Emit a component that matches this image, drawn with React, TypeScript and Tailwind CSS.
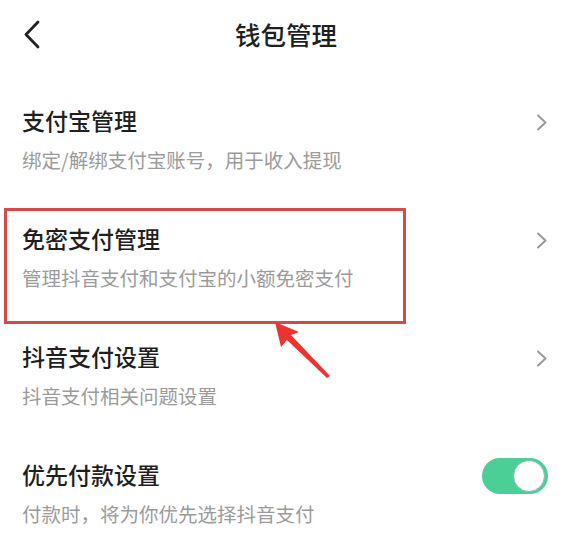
import React from "react";

type Item = {
  title: string;
  desc: string;
  toggle?: boolean;
  highlight?: boolean;
};

const items: Item[] = [
  { title: "支付宝管理", desc: "绑定/解绑支付宝账号，用于收入提现" },
  {
    title: "免密支付管理",
    desc: "管理抖音支付和支付宝的小额免密支付",
    highlight: true,
  },
  { title: "抖音支付设置", desc: "抖音支付相关问题设置" },
  { title: "优先付款设置", desc: "付款时，将为你优先选择抖音支付", toggle: true },
];

function ChevronRight() {
  return (
    <svg width="12" height="17" viewBox="0 0 12 17" fill="none">
      <path
        d="M2 1.5L9.5 8.5L2 15.5"
        stroke="#9a9a9a"
        strokeWidth="2"
        strokeLinecap="round"
        strokeLinejoin="round"
      />
    </svg>
  );
}

function Toggle() {
  return (
    <div className="w-[66px] h-[36px] rounded-full bg-[#4ccf96] flex items-center justify-end pr-[3px]">
      <div className="w-[32px] h-[32px] rounded-full bg-white border border-[#8fb9a6]" />
    </div>
  );
}

function Row({ item }: { item: Item }) {
  return (
    <div className="relative h-[118px] pt-[17px] pl-[22px] pr-[24px] flex justify-between">
      <div>
        <div className="text-[23px] leading-[30px] font-medium text-[#1f1f1f]">
          {item.title}
        </div>
        <div className="mt-[12px] text-[19.5px] leading-[26px] text-[#9b9b9b]">
          {item.desc}
        </div>
      </div>
      <div className="h-[34px] flex items-center">
        {item.toggle ? <Toggle /> : <ChevronRight />}
      </div>
      {item.highlight && (
        <div className="absolute left-[4px] top-[2px] w-[402px] h-[116px] border-[3px] border-[#d44a48] pointer-events-none" />
      )}
    </div>
  );
}

export default function App() {
  return (
    <div
      className="relative w-[572px] h-[536px] bg-white overflow-hidden"
      style={{ fontFamily: '"Noto Sans CJK SC", "Noto Sans", sans-serif' }}
    >
      <div className="relative h-[68px] flex items-center justify-center">
        <svg
          className="absolute left-[22px] top-[20px]"
          width="20"
          height="30"
          viewBox="0 0 20 30"
          fill="none"
        >
          <path
            d="M16 2L4 14.5L16 27"
            stroke="#222"
            strokeWidth="2.8"
            strokeLinecap="round"
            strokeLinejoin="round"
          />
        </svg>
        <span className="text-[25.5px] font-medium text-[#1f1f1f]">钱包管理</span>
      </div>

      <div className="pt-[20px]">
        {items.map((item) => (
          <Row key={item.title} item={item} />
        ))}
      </div>

      <svg
        className="absolute left-0 top-0 pointer-events-none"
        width="572"
        height="536"
        viewBox="0 0 572 536"
      >
        <polygon
          points="275,322 281,347 287,340 327,378 330,376 291,335 299,332"
          fill="#ec3330"
        />
      </svg>
    </div>
  );
}
